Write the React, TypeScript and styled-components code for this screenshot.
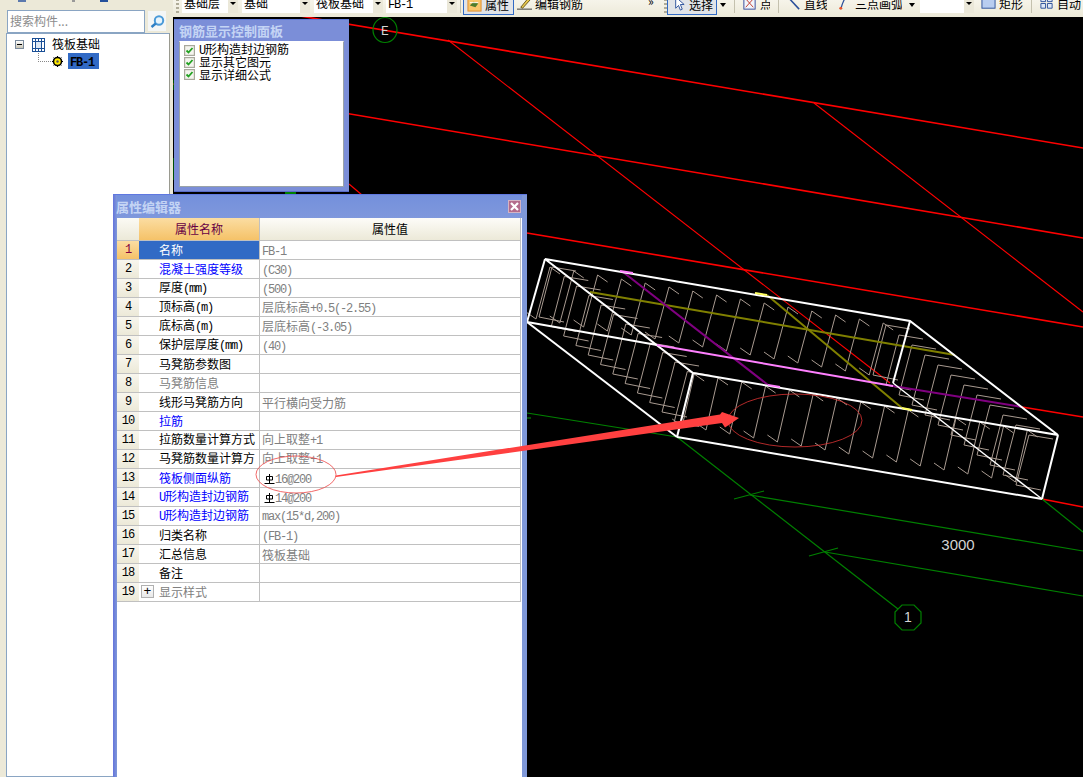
import * as React from 'react'

import styled, { createGlobalStyle } from 'styled-components'

const CJK = '"Noto Sans CJK SC", "Liberation Sans", sans-serif'
const MONO = '"Liberation Mono", "Noto Sans CJK SC", monospace'

interface PropRow {
  name: string
  value?: string
  tone?: 'blue' | 'gray'
  rebar?: boolean
  raised?: boolean
  expand?: boolean
}

const ROWS: PropRow[] = [
  { name: '名称', value: 'FB-1' },
  { name: '混凝土强度等级', value: '(C30)', tone: 'blue' },
  { name: '厚度(mm)', value: '(500)' },
  { name: '顶标高(m)', value: '层底标高+0.5(-2.55)' },
  { name: '底标高(m)', value: '层底标高(-3.05)' },
  { name: '保护层厚度(mm)', value: '(40)' },
  { name: '马凳筋参数图' },
  { name: '马凳筋信息', tone: 'gray' },
  { name: '线形马凳筋方向', value: '平行横向受力筋' },
  { name: '拉筋', tone: 'blue' },
  { name: '拉筋数量计算方式', value: '向上取整+1', raised: true },
  { name: '马凳筋数量计算方', value: '向上取整+1', raised: true },
  { name: '筏板侧面纵筋', value: '16@200', tone: 'blue', rebar: true },
  { name: 'U形构造封边钢筋', value: '14@200', tone: 'blue', rebar: true },
  { name: 'U形构造封边钢筋', value: 'max(15*d,200)', tone: 'blue', raised: true },
  { name: '归类名称', value: '(FB-1)' },
  { name: '汇总信息', value: '筏板基础' },
  { name: '备注' },
  { name: '显示样式', tone: 'gray', expand: true }
]

// latin runs use a narrow mono so they take the half-width cell of the original bitmap font
const Text = ({ children }: { children: string }) => (
  <>
    {children.split(/([\x20-\x7e]+)/).map((part, i) =>
      /^[\x20-\x7e]+$/.test(part) ? <Latin key={i}>{part}</Latin> : part
    )}
  </>
)

const pts = (list: number[][]) => list.map(p => p.join(',')).join(' ')

const range = (n: number) => Array.from({ length: n }, (_, i) => i)

const backRow = range(15).map(i => {
  const x = 550 + i * 23.8
  const y = 267 + i * 4
  return pts([[x + 10, y + 7], [x, y], [x - 14, y + 52], [x - 24, y + 45]])
})

const frontRow = range(15).map(i => {
  const x = 718 + (i - 1) * 23.8
  const y = 378 + (i - 1) * 4
  return pts([[x + 10, y + 7], [x, y], [x - 12, y + 52], [x - 22, y + 45]])
})

const leftSide = range(12).map(i => {
  const x = 552 + i * 12.3
  const y = 267 + i * 9.5
  return pts([[x + 24, y + 4], [x, y], [x - 13, y + 50], [x + 12, y + 55]])
})

const rightSide = range(12).map(i => {
  const x = 886 + i * 13
  const y = 325 + i * 10
  return pts([[x + 24, y + 4], [x, y], [x - 13, y + 50], [x + 12, y + 55]])
})

const CadDrawing = () => (
  <CadSvg viewBox="173 17 910 760">
    <g stroke="#ff0000" strokeWidth="1.1">
      <line x1="300" y1="16" x2="1083" y2="148" strokeWidth="1.6" />
      <line x1="173" y1="84" x2="1083" y2="238" strokeWidth="1.6" />
      <line x1="527" y1="233" x2="1083" y2="327" strokeWidth="1.6" />
      <line x1="448" y1="40" x2="890" y2="383" />
      <line x1="814" y1="103" x2="1083" y2="312" />
      <line x1="349" y1="184" x2="362" y2="195" />
      <line x1="1022" y1="407" x2="1083" y2="417" strokeWidth="1.6" />
      <line x1="1042" y1="499" x2="1083" y2="507" strokeWidth="1.6" />
    </g>
    <g stroke="#008000" strokeWidth="1.2" fill="none">
      <line x1="527" y1="413" x2="677" y2="437" />
      <line x1="527" y1="418" x2="531" y2="418" />
      <line x1="677" y1="437" x2="898" y2="609" />
      <line x1="1042" y1="499" x2="1083" y2="532" />
      <line x1="750" y1="495" x2="1083" y2="551" />
      <line x1="825" y1="552" x2="1083" y2="596" />
      <line x1="734" y1="499" x2="764" y2="491" />
      <line x1="809" y1="556" x2="838" y2="548" />
      <line x1="174" y1="80" x2="174" y2="90" />
      <line x1="174" y1="158" x2="174" y2="180" />
      <line x1="285" y1="193" x2="296" y2="193" strokeWidth="2" />
      <ellipse cx="385" cy="30" rx="12" ry="12.5" />
      <polygon points="902,605 914,605 921,612 921,623 914,630 902,630 895,623 895,612" />
    </g>
    <g stroke="#a89a90" strokeWidth="1" fill="none">
      {[...backRow, ...frontRow, ...leftSide, ...rightSide].map((p, i) => (
        <polyline key={i} points={p} />
      ))}
    </g>
    <g stroke="#808000" strokeWidth="2">
      <line x1="590" y1="292" x2="955" y2="355" />
      <line x1="767" y1="295" x2="902" y2="408" />
    </g>
    <g stroke="#800080" strokeWidth="2">
      <line x1="623" y1="272" x2="768" y2="385" />
      <line x1="893" y1="386" x2="1022" y2="407" />
    </g>
    <g stroke="#ffffff" strokeWidth="2" fill="none">
      <polygon points="545,259 910,321 1058,435 693,373" />
      <line x1="545" y1="259" x2="527" y2="322" />
      <line x1="910" y1="321" x2="893" y2="383" />
      <line x1="1058" y1="435" x2="1042" y2="499" />
      <line x1="693" y1="373" x2="677" y2="437" />
      <line x1="527" y1="322" x2="677" y2="437" />
      <line x1="677" y1="437" x2="1042" y2="499" />
      <line x1="527" y1="322" x2="657" y2="345" />
      <line x1="893" y1="383" x2="1042" y2="499" strokeWidth="1.4" />
    </g>
    <g stroke="#ff80ff" strokeWidth="2">
      <line x1="657" y1="345" x2="893" y2="386" />
      <line x1="620" y1="271" x2="633" y2="273" />
      <line x1="768" y1="385" x2="780" y2="387" />
    </g>
    <g stroke="#ffff60" strokeWidth="2">
      <line x1="755" y1="293" x2="767" y2="295" />
      <line x1="902" y1="408" x2="912" y2="410" />
    </g>
    <CadLabel $mono x="385" y="35" fontSize="13">E</CadLabel>
    <CadLabel x="908" y="622" fontSize="14">1</CadLabel>
    <CadLabel x="958" y="550" fontSize="15">3000</CadLabel>
  </CadSvg>
)

const RebarIcon = () => (
  <RebarSvg viewBox="0 0 11 11">
    <path d="M2.5 3.5h6v3.5h-6zM5.5 1v9M0.5 10.5h10" stroke="#000" fill="none" />
  </RebarSvg>
)

const CheckBox = () => (
  <CheckMark viewBox="0 0 11 11">
    <rect x="0.5" y="0.5" width="10" height="10" fill="#f4f4ee" stroke="#a8a89c" strokeWidth="1.4" />
    <path d="M2.5 5.5l2 2 4-4.5" fill="none" stroke="#21a121" strokeWidth="1.8" />
  </CheckMark>
)

const SlabIcon = () => (
  <TreeGlyph $w={13} viewBox="0 0 13 14">
    <rect x="0.5" y="0.5" width="12" height="13" fill="#fff" stroke="#1a4f96" />
    <rect x="3.5" y="3.5" width="6" height="7" fill="#dbe7f5" stroke="#1a4f96" />
    <path d="M0 3.5h13M0 10.5h13M3.5 0v14M9.5 0v14M6.5 0v3M6.5 11v3" stroke="#1a4f96" />
  </TreeGlyph>
)

const GearIcon = () => (
  <TreeGlyph $w={11} viewBox="0 0 11 11">
    <circle cx="5.5" cy="5.5" r="4.8" fill="#000" />
    <circle cx="5.5" cy="5.5" r="3.2" fill="#ffe900" />
    <circle cx="5.5" cy="5.5" r="1.2" fill="#555" />
    <path d="M5.5 0v11M0 5.5h11M1.6 1.6l7.8 7.8M9.4 1.6l-7.8 7.8" stroke="#000" strokeDasharray="1.6 7.8" />
  </TreeGlyph>
)

const SearchIcon = () => (
  <svg width="15" height="13" viewBox="0 0 15 13">
    <circle cx="9" cy="5.5" r="4.2" fill="#e8f4fc" stroke="#4a9ad8" strokeWidth="2" />
    <path d="M5.8 8.5L1.5 12" stroke="#2f7fc4" strokeWidth="2.4" />
  </svg>
)

const ToolIcon = ({ kind }: { kind: string }) => {
  switch (kind) {
    case 'prop':
      return (
        <ToolSvg viewBox="0 0 16 16">
          <rect x="1" y="1" width="14" height="14" fill="#f9c66b" stroke="#e08c2a" />
          <path d="M3 9l4-4 5 2-3 4z" fill="#4f7d2c" />
          <path d="M3 6h9" stroke="#fff" />
        </ToolSvg>
      )
    case 'edit':
      return (
        <ToolSvg viewBox="0 0 16 16">
          <path d="M4 12L13 1l2 2-9 10z" fill="#e9c84e" stroke="#6b5a1c" />
          <path d="M0 14h16" stroke="#333" />
        </ToolSvg>
      )
    case 'cursor':
      return (
        <ToolSvg viewBox="0 0 16 16">
          <path d="M5 0l0 12 3-3 2 5 2-1-2-5 4 0z" fill="#fff" stroke="#2a4f9a" />
        </ToolSvg>
      )
    case 'point':
      return (
        <ToolSvg viewBox="0 0 16 16">
          <rect x="2" y="1" width="12" height="13" fill="#f2f5fb" stroke="#33479a" />
          <path d="M4 3l8 9M12 3l-8 9" stroke="#c0392b" />
        </ToolSvg>
      )
    case 'line':
      return (
        <ToolSvg viewBox="0 0 16 16">
          <path d="M1 0l13 14" stroke="#2a4f9a" strokeWidth="1.6" />
        </ToolSvg>
      )
    case 'arc':
      return (
        <ToolSvg viewBox="0 0 16 16">
          <path d="M4 14Q6 6 10 0" fill="none" stroke="#2a4f9a" strokeWidth="1.3" />
          <circle cx="4" cy="13" r="1.6" fill="#e8552c" />
          <circle cx="9" cy="2" r="1.6" fill="#e8552c" />
        </ToolSvg>
      )
    case 'rect':
      return (
        <ToolSvg viewBox="0 0 16 16">
          <rect x="1" y="0" width="14" height="13" fill="#b8cdf0" stroke="#2a4f9a" />
        </ToolSvg>
      )
    default:
      return (
        <ToolSvg viewBox="0 0 16 16">
          <path d="M2 1h5v5H2zM9 1h5v5H9zM2 8h5v5H2zM9 8h5v5H9z" fill="#dfe8f6" stroke="#2a4f9a" />
        </ToolSvg>
      )
  }
}

const ComboBox = ({ ml, w, children }: { ml: number; w: number; children?: string }) => (
  <Combo $ml={ml} $w={w}>
    <ComboText>{children ? <Text>{children}</Text> : null}</ComboText>
    <ComboButton />
  </Combo>
)

const App = () => (
  <Page>
    <GlobalStyle />
    <LeftPane>
      <TopIcons>
        <ClippedIcon $ml={18} $w={8} $color="#5b79ae" />
        <ClippedIcon $ml={46} $w={3} $color="#999" />
        <ClippedIcon $ml={25} $w={8} $color="#24509c" />
      </TopIcons>
      <SearchRow>
        <SearchInput>搜索构件...</SearchInput>
        <SearchButton>
          <SearchIcon />
        </SearchButton>
      </SearchRow>
      <Tree>
        <TreeRoot>
          <Collapse />
          <SlabIcon />
          <TreeLabel>筏板基础</TreeLabel>
        </TreeRoot>
        <TreeLeaf>
          <Connector />
          <GearIcon />
          <TreeSelected>
            <Text>FB-1</Text>
          </TreeSelected>
        </TreeLeaf>
      </Tree>
    </LeftPane>

    <MainPane>
      <Toolbar>
        <Grip $ml={3} />
        <ComboBox ml={3} w={56}>基础层</ComboBox>
        <ComboBox ml={4} w={68}>基础</ComboBox>
        <ComboBox ml={4} w={69}>筏板基础</ComboBox>
        <ComboBox ml={3} w={71}>FB-1</ComboBox>
        <Separator $ml={3} />
        <ToolButton $ml={2} $w={51} $active>
          <ToolIcon kind="prop" />
          属性
        </ToolButton>
        <ToolButton $ml={3} $w={67}>
          <ToolIcon kind="edit" />
          编辑钢筋
        </ToolButton>
        <Overflow $ml={64}>»</Overflow>
        <Grip $ml={6} />
        <ToolButton $ml={0} $w={50} $active>
          <ToolIcon kind="cursor" />
          选择
        </ToolButton>
        <ToolArrow $ml={3} />
        <Separator $ml={7} />
        <ToolButton $ml={7} $w={28}>
          <ToolIcon kind="point" />点
        </ToolButton>
        <Separator $ml={8} />
        <ToolButton $ml={7} $w={41}>
          <ToolIcon kind="line" />
          直线
        </ToolButton>
        <ToolButton $ml={10} $w={65}>
          <ToolIcon kind="arc" />
          三点画弧
        </ToolButton>
        <ToolArrow $ml={7} />
        <ComboBox ml={4} w={54} />
        <ToolButton $ml={7} $w={43}>
          <ToolIcon kind="rect" />
          矩形
        </ToolButton>
        <Separator $ml={7} />
        <ToolButton $ml={7} $w={52}>
          <ToolIcon kind="auto" />
          自动
        </ToolButton>
      </Toolbar>
      <Canvas>
        <CadDrawing />
      </Canvas>
    </MainPane>

    <ControlWindow>
      <ControlTitle>钢筋显示控制面板</ControlTitle>
      <ControlBody>
        <CheckItem>
          <CheckBox />
          <span>
            <Text>U形构造封边钢筋</Text>
          </span>
        </CheckItem>
        <CheckItem>
          <CheckBox />
          <span>显示其它图元</span>
        </CheckItem>
        <CheckItem>
          <CheckBox />
          <span>显示详细公式</span>
        </CheckItem>
      </ControlBody>
    </ControlWindow>

    <EditorWindow>
      <EditorTitle>
        <EditorCaption>属性编辑器</EditorCaption>
        <CloseButton>
          <svg width="9" height="9" viewBox="0 0 9 9">
            <path d="M1 1l7 7M8 1L1 8" stroke="#fff" strokeWidth="2.2" />
          </svg>
        </CloseButton>
      </EditorTitle>
      <EditorBody>
        <HeaderRow>
          <HeaderCorner />
          <HeaderName>属性名称</HeaderName>
          <HeaderValue>属性值</HeaderValue>
        </HeaderRow>
        {ROWS.map((row, i) => (
          <Row key={i}>
            <NumCell $current={i === 0}>{i + 1}</NumCell>
            <NameCell $current={i === 0} $tone={row.tone} $raised={row.raised} $expand={row.expand}>
              {row.expand ? <PlusBox>+</PlusBox> : null}
              <span>
                <Text>{row.name}</Text>
              </span>
            </NameCell>
            <ValueCell $raised={row.raised}>
              {row.rebar ? <RebarIcon /> : null}
              {row.value ? (
                <span>
                  <Text>{row.value}</Text>
                </span>
              ) : null}
            </ValueCell>
          </Row>
        ))}
      </EditorBody>
    </EditorWindow>

    <AnnotationSvg viewBox="0 0 1083 777">
      <ellipse cx="296" cy="474.5" rx="40" ry="18.5" fill="none" stroke="#ee5050" strokeOpacity="0.85" />
      <ellipse cx="795" cy="420.5" rx="67" ry="26.5" fill="none" stroke="#d03030" strokeOpacity="0.85" />
      <polygon
        points="336,475.5 720,414.5 722,412 739,418 725,427.5 722,423 336,477"
        fill="#ff4040"
      />
    </AnnotationSvg>
  </Page>
)

export default App

const GlobalStyle = createGlobalStyle`
  html,
  body {
    margin: 0;
    padding: 0;
    background: #000;
  }
`

const Page = styled.div`
  position: relative;
  display: grid;
  grid-template-columns: 173px 1fr;
  width: 1083px;
  height: 777px;
  overflow: hidden;

  font-family: ${CJK};
  font-size: 12px;
  color: #000;
`

const Latin = styled.span`
  font-family: ${MONO};
  font-size: 12px;
  letter-spacing: -1.2px;
`

const LeftPane = styled.div`
  display: flex;
  flex-direction: column;
  background: #ece9d8;
`

const TopIcons = styled.div`
  display: flex;
  height: 9px;
`

const ClippedIcon = styled.span<{ $ml: number; $w: number; $color: string }>`
  width: ${p => p.$w}px;
  height: 2px;
  margin-left: ${p => p.$ml}px;

  background: ${p => p.$color};
`

const SearchRow = styled.div`
  display: flex;
  align-items: center;
  height: 24px;
  padding-left: 7px;
`

const SearchInput = styled.div`
  box-sizing: border-box;
  width: 138px;
  height: 23px;
  padding-left: 2px;

  line-height: 20px;
  color: #8c8c8c;
  background: #fff;
  border: 1px solid #8aa5c3;
`

const SearchButton = styled.div`
  display: flex;
  align-items: center;
  justify-content: center;
  width: 18px;
  height: 20px;
  margin-left: 3px;

  background: #f4f6f6;
`

const Tree = styled.div`
  box-sizing: border-box;
  flex: 1;
  width: 164px;
  margin-left: 6px;
  padding-top: 3px;

  background: #fff;
  border: 1px solid #8aa5c3;
  border-right-color: #9a9a90;
`

const TreeRoot = styled.div`
  display: flex;
  align-items: center;
  height: 15px;
  padding-left: 8px;
`

const Collapse = styled.span`
  position: relative;
  box-sizing: border-box;
  width: 9px;
  height: 9px;
  margin-right: 8px;

  background: linear-gradient(#fff, #c8c4b4);
  border: 1px solid #7a8a9c;

  &::after {
    content: '';
    position: absolute;
    top: 3px;
    left: 1px;
    width: 5px;
    height: 1px;
    background: #000;
  }
`

const TreeGlyph = styled.svg<{ $w: number }>`
  flex: none;
  width: ${p => p.$w}px;
  height: ${p => (p.$w === 13 ? 14 : 11)}px;
`

const TreeLabel = styled.span`
  margin-left: 7px;
  padding-bottom: 2px;
  white-space: nowrap;
`

const TreeLeaf = styled.div`
  display: flex;
  align-items: center;
  height: 16px;
  margin-top: 1px;
  padding-left: 31px;
`

const Connector = styled.span`
  box-sizing: border-box;
  align-self: flex-start;
  width: 13px;
  height: 9px;
  margin-right: 1px;

  border-left: 1px dotted #888;
  border-bottom: 1px dotted #888;
`

const TreeSelected = styled.span`
  width: 31px;
  height: 16px;
  margin-left: 5px;
  padding-left: 2px;
  box-sizing: border-box;

  line-height: 15px;
  font-weight: 700;
  background: #316ac5;
`

const MainPane = styled.div`
  display: flex;
  flex-direction: column;
  min-width: 0;
`

const Toolbar = styled.div`
  display: flex;
  flex: none;
  align-items: flex-end;
  height: 17px;
  padding-bottom: 4px;
  box-sizing: border-box;
  overflow: hidden;

  background: linear-gradient(#f6f4ea, #ece9d8);
`

const Grip = styled.span<{ $ml: number }>`
  flex: none;
  width: 3px;
  height: 14px;
  margin-left: ${p => p.$ml}px;
  margin-right: 0;

  background: repeating-linear-gradient(#b0ac98 0 2px, transparent 2px 4px);
`

const Combo = styled.div<{ $ml: number; $w: number }>`
  display: flex;
  flex: none;
  width: ${p => p.$w}px;
  height: 20px;
  margin-left: ${p => p.$ml}px;

  background: #fff;
`

const ComboText = styled.span`
  flex: 1;
  padding-left: 2px;
  overflow: hidden;

  line-height: 20px;
  white-space: nowrap;
`

const ComboButton = styled.span`
  position: relative;
  flex: none;
  width: 10px;

  background: #ebe8d9;

  &::after {
    content: '';
    position: absolute;
    top: 9px;
    left: 2px;
    border: 3px solid transparent;
    border-top: 3px solid #000;
  }
`

const Separator = styled.span<{ $ml: number }>`
  flex: none;
  width: 1px;
  height: 14px;
  margin-left: ${p => p.$ml}px;

  background: #c4c1ae;
`

const ToolButton = styled.div<{ $ml: number; $w: number; $active?: boolean }>`
  display: flex;
  flex: none;
  align-items: center;
  gap: 3px;
  box-sizing: border-box;
  width: ${p => p.$w}px;
  height: ${p => (p.$active ? 22 : 20)}px;
  margin-left: ${p => p.$ml}px;
  margin-bottom: ${p => (p.$active ? -2 : 0)}px;
  padding-left: ${p => (p.$active ? 3 : 0)}px;
  overflow: hidden;

  white-space: nowrap;
  background: ${p => (p.$active ? '#e1e4e8' : 'transparent')};
  border: ${p => (p.$active ? '1px solid #316ac5' : 'none')};
`

const ToolSvg = styled.svg`
  flex: none;
  width: 15px;
  height: 15px;
`

const ToolArrow = styled.span<{ $ml: number }>`
  flex: none;
  width: 0;
  height: 0;
  margin-left: ${p => p.$ml}px;
  margin-right: 1px;
  margin-bottom: 6px;

  border: 3px solid transparent;
  border-top: 4px solid #000;
  border-bottom: none;
`

const Overflow = styled.span<{ $ml: number }>`
  flex: none;
  width: 10px;
  height: 16px;
  margin-left: ${p => p.$ml}px;

  line-height: 8px;
`

const Canvas = styled.div`
  flex: 1;
  background: #000;
`

const CadSvg = styled.svg`
  display: block;
  width: 910px;
  height: 760px;
`

const CadLabel = styled.text<{ $mono?: boolean }>`
  font-family: ${p => (p.$mono ? MONO : "'Liberation Sans', sans-serif")};
  text-anchor: middle;
  fill: #d4d4d4;
`

const RebarSvg = styled.svg`
  flex: none;
  width: 11px;
  height: 11px;
  margin-left: 2px;
`

const ControlWindow = styled.div`
  position: absolute;
  top: 19px;
  left: 174px;
  display: flex;
  flex-direction: column;
  box-sizing: border-box;
  width: 175px;
  height: 173px;
  padding: 0 5px 4px;

  background: #7b8ed8;
  border-top: 1px solid #5f78d8;
  border-bottom: 1px solid #5a6cc8;
`

const ControlTitle = styled.div`
  flex: none;
  height: 21px;

  font-size: 13px;
  font-weight: 700;
  line-height: 22px;
  color: #c4d4f4;
  white-space: nowrap;
`

const ControlBody = styled.div`
  flex: 1;
  padding: 2px 0 0 4px;

  background: #fff;
  border: 1px solid #9aa3a8;
  border-top-color: #fff;
`

const CheckItem = styled.div`
  display: flex;
  align-items: center;
  gap: 4px;
  height: 12.3px;

  line-height: 12px;
  white-space: nowrap;
`

const CheckMark = styled.svg`
  flex: none;
  width: 11px;
  height: 11px;
`

const EditorWindow = styled.div`
  position: absolute;
  top: 194px;
  left: 113px;
  display: flex;
  flex-direction: column;
  box-sizing: border-box;
  width: 414px;
  height: 583px;
  padding: 0 5px 0 4px;

  background: linear-gradient(90deg, #6474dc 0, #7f98d8 4px, #7f98d8 100%);
  border-top: 1px solid #5f78e0;
`

const EditorTitle = styled.div`
  display: flex;
  flex: none;
  align-items: center;
  justify-content: space-between;
  height: 23px;

  font-size: 13px;
  font-weight: 700;
  color: #c4d4f4;
  background: linear-gradient(#7490dc, #7f98dc);
`

const EditorCaption = styled.span`
  margin-left: -1px;
`

const CloseButton = styled.span`
  display: flex;
  align-items: center;
  justify-content: center;
  box-sizing: border-box;
  width: 13px;
  height: 13px;
  margin-right: 1px;

  background: #b46c8c;
  border: 1px solid #d4b4c4;
`

const EditorBody = styled.div`
  flex: 1;
  background: #fff;
`

const Row = styled.div`
  display: grid;
  grid-template-columns: 22px 121px 261px;
  height: 19px;
`

const HeaderRow = styled(Row)`
  height: 23px;

  line-height: 21px;
  text-align: center;
`

const HeaderCorner = styled.div`
  background: linear-gradient(#fbfaf4, #ece9d8);
  border-bottom: 1px solid #c0c0c0;
`

const HeaderName = styled.div`
  color: #660044;
  background: linear-gradient(#fbdda2, #f5c268);
  border-bottom: 1px solid #c0c0c0;
  border-right: 1px solid #c0c0c0;
`

const HeaderValue = styled.div`
  background: linear-gradient(#fdfcf8, #ece9d8);
  border-bottom: 1px solid #c0c0c0;
  border-right: 1px solid #c0c0c0;
`

const NumCell = styled.div<{ $current?: boolean }>`
  box-sizing: border-box;
  height: 19px;
  border-bottom: 1px solid #c0c0c0;

  font-family: ${MONO};
  font-size: 12px;
  letter-spacing: -1px;
  line-height: 19px;
  text-align: center;
  color: ${p => (p.$current ? '#800040' : '#000')};
  background: ${p => (p.$current ? 'linear-gradient(#fbdda2, #f5c268)' : 'linear-gradient(#f8f6ee, #ece9d8)')};
`

const toneColor = { blue: '#0000ff', gray: '#808080' }

const NameCell = styled.div<{
  $current?: boolean
  $tone?: 'blue' | 'gray'
  $raised?: boolean
  $expand?: boolean
}>`
  display: flex;
  align-items: center;
  gap: 5px;
  box-sizing: border-box;
  height: 19px;
  min-width: 0;
  padding-left: ${p => (p.$expand ? 2 : 20)}px;
  padding-bottom: ${p => (p.$raised ? 3 : 2)}px;
  overflow: hidden;

  white-space: nowrap;
  color: ${p => (p.$current ? '#fff' : p.$tone ? toneColor[p.$tone] : '#000')};
  background: ${p => (p.$current ? '#316ac5' : '#fff')};
  border-bottom: 1px solid #c0c0c0;
  border-right: 1px solid #c0c0c0;
`

const PlusBox = styled.span`
  flex: none;
  box-sizing: border-box;
  width: 13px;
  height: 13px;

  font-family: ${MONO};
  font-size: 13px;
  line-height: 11px;
  text-align: center;
  color: #000;
  background: linear-gradient(#fff, #e8e8e8);
  border: 1px solid #b0b0b0;
`

const ValueCell = styled.div<{ $raised?: boolean }>`
  display: flex;
  align-items: center;
  box-sizing: border-box;
  height: 19px;
  padding-left: 2px;
  padding-bottom: ${p => (p.$raised ? 2 : 0)}px;

  white-space: pre;
  color: #808080;
  background: #fff;
  border-bottom: 1px solid #c0c0c0;
  border-right: 1px solid #c0c0c0;
`

const AnnotationSvg = styled.svg`
  position: absolute;
  top: 0;
  left: 0;
  width: 1083px;
  height: 777px;
  pointer-events: none;
`
